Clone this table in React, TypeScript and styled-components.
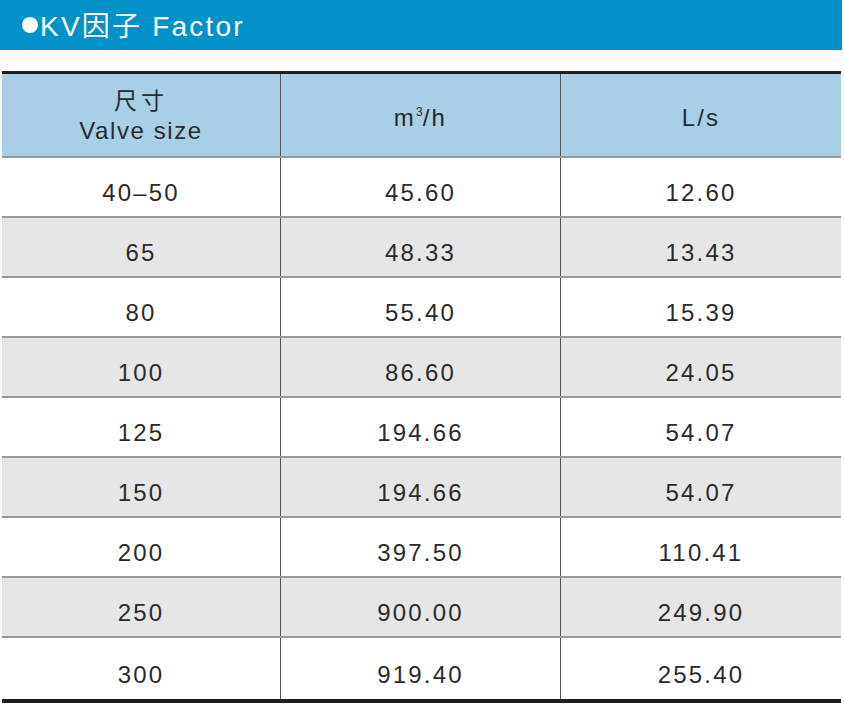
import React from 'react'
import styled, { createGlobalStyle } from 'styled-components'

const GlobalStyle = createGlobalStyle`
  html, body {
    margin: 0;
    padding: 0;
    background: #ffffff;
  }
  body {
    font-family: "Liberation Sans", "Noto Sans CJK SC", sans-serif;
    color: #2b2b2b;
  }
`

const Page = styled.div`
  width: 844px;
  height: 705px;
  overflow: hidden;
  background: #fff;
`

// blue title band across the top
const TitleBar = styled.div`
  height: 50px;
  margin-right: 2px;
  background: #0091c9;
  display: flex;
  align-items: center;
  padding-left: 22px;
  padding-bottom: 3px;
  box-sizing: border-box;
  color: #fff;
  font-size: 28px;
  letter-spacing: 2.2px;
`

const Dot = styled.span`
  display: inline-block;
  width: 16px;
  height: 16px;
  border-radius: 50%;
  background: #fff;
  margin-right: 2px;
  margin-top: 2px;
`

const Table = styled.div`
  margin: 21px 3px 0 2px;
  border-top: 3px solid #1e1e1e;
  border-bottom: 4px solid #1e1e1e;
`

const Row = styled.div<{ $shade: 'head' | 'gray' | 'white'; $last?: boolean }>`
  display: grid;
  grid-template-columns: 279px 280px 1fr;
  height: ${p => (p.$shade === 'head' ? '82px' : p.$last ? '61px' : '58px')};
  background: ${p =>
    p.$shade === 'head' ? '#a9cfe7' : p.$shade === 'gray' ? '#e6e6e6' : '#ffffff'};
  border-bottom: ${p => (p.$last ? 'none' : '2px solid #9a9a9a')};
`

const Cell = styled.div<{ $head?: boolean }>`
  display: flex;
  flex-direction: column;
  align-items: center;
  justify-content: center;
  padding-top: ${p => (p.$head ? '5px' : '12px')};
  box-sizing: border-box;
  font-size: 24px;
  letter-spacing: 2.2px;
  color: #2b2b2b;
  border-right: 1px solid #555;

  &:last-child {
    border-right: none;
  }
`

const HeadCn = styled.span`
  font-size: 23px;
  letter-spacing: 4px;
  line-height: 26px;
`

const HeadEn = styled.span`
  letter-spacing: 1.6px;
  line-height: 34px;
`

const Sup = styled.sup`
  font-size: 12px;
  letter-spacing: 0;
  vertical-align: 10px;
  line-height: 0;
`

const rows: [string, string, string][] = [
  ['40–50', '45.60', '12.60'],
  ['65', '48.33', '13.43'],
  ['80', '55.40', '15.39'],
  ['100', '86.60', '24.05'],
  ['125', '194.66', '54.07'],
  ['150', '194.66', '54.07'],
  ['200', '397.50', '110.41'],
  ['250', '900.00', '249.90'],
  ['300', '919.40', '255.40'],
]

export default function App() {
  return (
    <Page>
      <GlobalStyle />
      <TitleBar>
        <Dot />KV因子 Factor
      </TitleBar>

      <Table>
        <Row $shade="head">
          <Cell $head>
            <HeadCn>尺寸</HeadCn>
            <HeadEn>Valve size</HeadEn>
          </Cell>
          <Cell $head>
            <span>
              m<Sup>3</Sup>/h
            </span>
          </Cell>
          <Cell $head>L/s</Cell>
        </Row>

        {rows.map((r, i) => (
          <Row key={r[0]} $shade={i % 2 === 1 ? 'gray' : 'white'} $last={i === rows.length - 1}>
            <Cell>{r[0]}</Cell>
            <Cell>{r[1]}</Cell>
            <Cell>{r[2]}</Cell>
          </Row>
        ))}
      </Table>
    </Page>
  )
}
